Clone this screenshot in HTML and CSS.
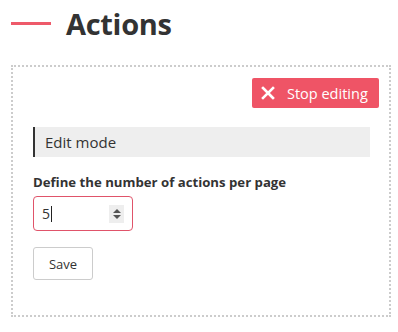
FILE: index.html
```html
<!DOCTYPE html>
<html lang="en">
<head>
    <meta charset="UTF-8">
    <meta name="viewport" content="width=device-width, initial-scale=1.0">
    <title>Actions</title>
    <link rel="stylesheet" href="styles.css">
</head>
<body>
    <div class="page-header">
        <span class="header-line"></span>
        <h1>Actions</h1>
    </div>

    <div class="edit-box">
        <div class="toolbar">
            <button class="stop-btn">
                <svg width="14" height="14" viewBox="0 0 14 14"><path d="M2 2 L12 12 M12 2 L2 12" stroke="#fff" stroke-width="2.6" stroke-linecap="square"/></svg>
                Stop editing
            </button>
        </div>

        <div class="mode-bar">Edit mode</div>

        <form class="settings-form">
            <label for="perPage">Define the number of actions per page</label>
            <div class="number-input">
                <span class="value">5</span><span class="caret"></span>
                <span class="spinner">
                    <svg width="10" height="16" viewBox="0 0 10 16"><path d="M5 3 L9 7 L1 7 Z M1 9 L9 9 L5 13 Z" fill="#555"/></svg>
                </span>
            </div>
            <button type="button" class="save-btn">Save</button>
        </form>
    </div>
</body>
</html>
```

FILE: styles.css
```css
body {
    margin: 0;
    padding: 0 7px 0 11px;
    font-family: "Open Sans", "Noto Sans", sans-serif;
    color: #333;
    background: #fff;
}
.page-header {
    display: flex;
    align-items: center;
    height: 46px;
}
.header-line {
    width: 40px;
    height: 3px;
    background: #ee5a6a;
    margin-right: 15px;
}
h1 {
    margin: 0;
    font-size: 29px;
    font-weight: 700;
    color: #333;
    letter-spacing: -0.3px;
}
.edit-box {
    margin-top: 19px;
    width: 380px;
    height: 252px;
    border: 2px dotted #ccc;
    padding: 11px 10px 0 20px;
    box-sizing: border-box;
}
.toolbar {
    display: flex;
    justify-content: flex-end;
}
.stop-btn {
    display: flex;
    align-items: center;
    gap: 12px;
    height: 30px;
    width: 127px;
    padding: 0 0 0 9px;
    background: #ef5466;
    color: #fff;
    border: none;
    border-radius: 2px;
    font-family: inherit;
    font-size: 14.5px;
}
.mode-bar {
    margin-top: 19px;
    margin-right: 9px;
    height: 30px;
    line-height: 30px;
    background: #eee;
    border-left: 2px solid #333;
    padding-left: 10px;
    font-size: 15px;
    color: #333;
}
.settings-form {
    display: flex;
    flex-direction: column;
    align-items: flex-start;
    margin-top: 16px;
}
.settings-form label {
    font-size: 13.2px;
    font-weight: 700;
    color: #333;
}
.number-input {
    display: flex;
    align-items: center;
    margin-top: 5px;
    width: 100px;
    height: 35px;
    box-sizing: border-box;
    border: 1px solid #e0546a;
    border-radius: 4px;
    padding: 0 8px 0 8px;
    font-size: 14px;
}
.caret {
    width: 1px;
    height: 16px;
    background: #222;
    margin-left: 1px;
}
.spinner {
    margin-left: auto;
    display: flex;
    align-items: center;
    justify-content: center;
    width: 15px;
    height: 18px;
    background: #eee;
}
.save-btn {
    margin-top: 16px;
    width: 60px;
    height: 33px;
    background: #fff;
    border: 1px solid #ccc;
    border-radius: 3px;
    font-family: inherit;
    font-size: 13px;
    color: #333;
}
```
